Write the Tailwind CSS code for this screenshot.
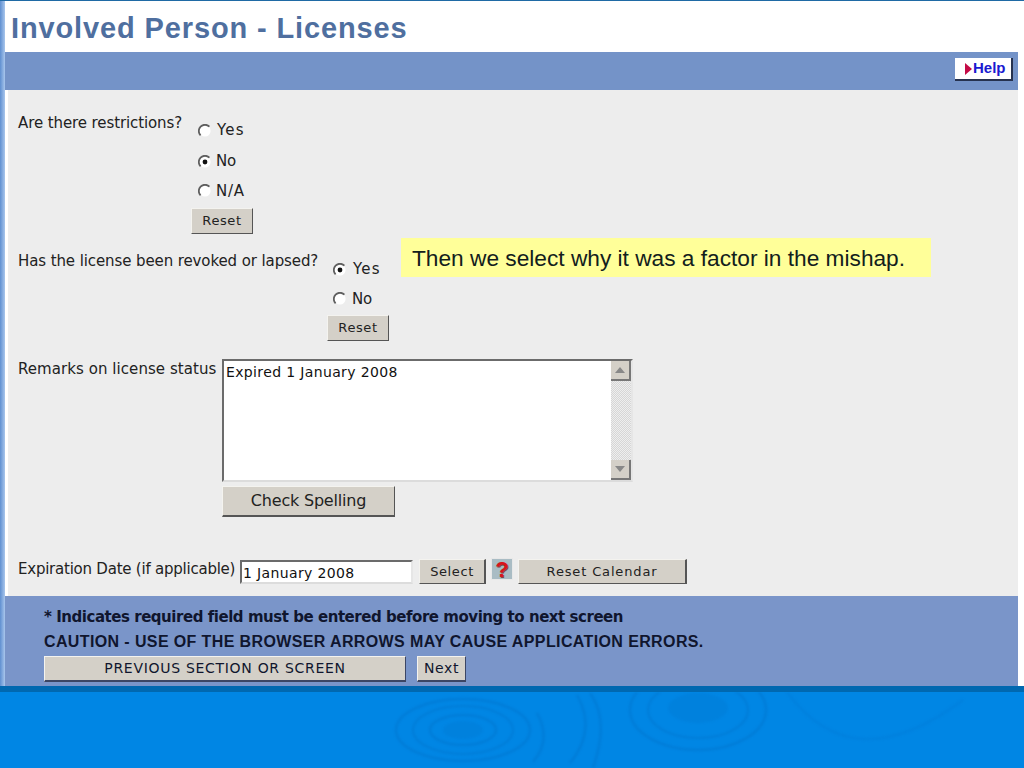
<!DOCTYPE html>
<html lang="en">
<head>
  <meta charset="UTF-8" />
  <title>Involved Person - Licenses</title>
  <script src="https://cdn.jsdelivr.net/npm/@tailwindcss/browser@4"></script>
</head>
<body class="w-[1024px] h-[768px] overflow-hidden bg-white relative font-['DejaVu_Sans',sans-serif] text-[#222]">
  <div class="h-[686px] flex border-t border-[#1f6aa5]">
    <div class="w-[5px] bg-gradient-to-r from-[#5f8fd0] to-[#a9c6ec]"></div>
    <div class="w-[1013px] flex flex-col">
      <h1 class="h-[51px] pl-[6px] pt-[7px] bg-white font-['Liberation_Sans',sans-serif] font-bold text-[29px] leading-[40px] tracking-[0.87px] text-[#4f6f9f]">Involved Person - Licenses</h1>
      <div class="h-[38px] bg-[#7493c8] flex items-start justify-end pr-[5px] pt-[6px]">
        <a class="w-[58px] h-[23px] pl-[10px] bg-white border-r-2 border-b-2 border-[#26324f] flex items-center gap-[1px] font-['Liberation_Sans',sans-serif] font-bold text-[15px] text-[#1a1ad0]">
          <svg width="7" height="12" viewBox="0 0 7 12"><path d="M0 0 L7 6 L0 12 Z" fill="#c40a45"/></svg>Help
        </a>
      </div>
      <div class="h-[506px] ml-[3px] bg-[#ededed] pl-[10px] text-[15px] tracking-[-0.1px]">
        <!-- restrictions -->
        <div class="h-[151px] flex pt-[21px]">
          <div class="w-[173px] leading-[24px]">Are there restrictions?</div>
          <div class="flex flex-col">
            <div class="h-[32px] pl-[7px] pt-[7px] flex items-center gap-[5px] tracking-[1.2px]"><svg width="14" height="14" viewBox="0 0 14 14"><circle cx="7" cy="7" r="5.6" fill="#fff"/><path d="M11.4 2.6 A6.2 6.2 0 0 0 2.6 11.4" fill="none" stroke="#5f5f5f" stroke-width="1.8"/></svg>Yes</div>
            <div class="h-[30px] pl-[7px] pt-[7px] flex items-center gap-[4px]"><svg width="14" height="14" viewBox="0 0 14 14"><circle cx="7" cy="7" r="5.6" fill="#fff"/><path d="M11.4 2.6 A6.2 6.2 0 0 0 2.6 11.4" fill="none" stroke="#5f5f5f" stroke-width="1.8"/><circle cx="7" cy="7" r="2.4" fill="#111"/></svg>No</div>
            <div class="h-[31px] pl-[7px] pt-[5px] flex items-center gap-[4px] tracking-[0.8px]"><svg width="14" height="14" viewBox="0 0 14 14"><circle cx="7" cy="7" r="5.6" fill="#fff"/><path d="M11.4 2.6 A6.2 6.2 0 0 0 2.6 11.4" fill="none" stroke="#5f5f5f" stroke-width="1.8"/></svg>N/A</div>
            <button class="mt-[4px] w-[62px] h-[26px] bg-[#d4d0c8] border border-[#f4f3ef] border-r-[#555] border-b-[#555] text-[13px] tracking-[0.6px]">Reset</button>
          </div>
        </div>
        <!-- revoked -->
        <div class="h-[118px] flex pt-[8px]">
          <div class="w-[309px] leading-[24px]">Has the license been revoked or lapsed?</div>
          <div class="flex flex-col">
            <div class="h-[32px] pl-[6px] pt-[9px] flex items-center gap-[6px] tracking-[1.2px]"><svg width="14" height="14" viewBox="0 0 14 14"><circle cx="7" cy="7" r="5.6" fill="#fff"/><path d="M11.4 2.6 A6.2 6.2 0 0 0 2.6 11.4" fill="none" stroke="#5f5f5f" stroke-width="1.8"/><circle cx="7" cy="7" r="2.4" fill="#111"/></svg>Yes</div>
            <div class="h-[30px] pl-[6px] pt-[6px] flex items-center gap-[5px]"><svg width="14" height="14" viewBox="0 0 14 14"><circle cx="7" cy="7" r="5.6" fill="#fff"/><path d="M11.4 2.6 A6.2 6.2 0 0 0 2.6 11.4" fill="none" stroke="#5f5f5f" stroke-width="1.8"/></svg>No</div>
            <button class="mt-[4px] w-[62px] h-[26px] bg-[#d4d0c8] border border-[#f4f3ef] border-r-[#555] border-b-[#555] text-[13px] tracking-[0.6px]">Reset</button>
          </div>
        </div>
        <!-- remarks -->
        <div class="h-[199px] flex">
          <div class="w-[204px] leading-[20px] tracking-[0.06px]">Remarks on license status</div>
          <div class="flex flex-col">
            <div class="w-[411px] h-[123px] bg-white border-2 border-[#6b6b6b] border-r-[#e6e6e6] border-b-[#dcdcdc] flex justify-between">
              <span class="pl-[2px] pt-[2px] text-[14px] tracking-[0.36px] leading-[18px] text-[#111]">Expired 1 January 2008</span>
              <div class="w-[20px] flex flex-col justify-between bg-[repeating-conic-gradient(#d6d6d6_0_25%,#eeeeee_0_50%)] bg-[length:2px_2px]">
                <div class="h-[20px] bg-[#d4d0c8] border-r-2 border-b-2 border-[#777] flex items-center justify-center"><svg width="10" height="6" viewBox="0 0 10 6"><path d="M5 0 L10 6 L0 6 Z" fill="#888"/></svg></div>
                <div class="h-[20px] bg-[#d4d0c8] border-r-2 border-b-2 border-[#777] flex items-center justify-center"><svg width="10" height="6" viewBox="0 0 10 6"><path d="M0 0 L10 0 L5 6 Z" fill="#888"/></svg></div>
              </div>
            </div>
            <button class="mt-[4px] w-[173px] h-[31px] bg-[#d4d0c8] border border-[#f4f3ef] border-r-[#555] border-b-[#555] border-b-2 text-[16px] tracking-[-0.2px]">Check Spelling</button>
          </div>
        </div>
        <!-- expiration -->
        <div class="flex items-start">
          <div class="w-[222px] pt-[1px] leading-[20px] tracking-[-0.23px]">Expiration Date (if applicable)</div>
          <div class="w-[173px] h-[24px] mt-[2px] bg-white border-2 border-[#6b6b6b] border-r-[#e6e6e6] border-b-[#dcdcdc] pl-[1px] text-[14px] tracking-[0.36px] leading-[22px] text-[#111]">1 January 2008</div>
          <button class="mt-[1px] ml-[6px] w-[67px] h-[25px] bg-[#d4d0c8] border border-[#f4f3ef] border-r-[#555] border-b-[#555] border-r-2 text-[13px] tracking-[0.6px]">Select</button>
          <div class="ml-[5px] w-[22px] h-[22px] bg-[#a9bcc4] border border-[#e8e8e8] flex items-center justify-center font-['Liberation_Sans',sans-serif] font-bold text-[22px] text-[#d8141c] [text-shadow:1px_1px_0_#7a4a4a]">?</div>
          <button class="mt-[1px] ml-[5px] w-[169px] h-[25px] bg-[#d4d0c8] border border-[#f4f3ef] border-r-[#555] border-b-[#555] border-r-2 text-[13px] tracking-[0.85px]">Reset Calendar</button>
        </div>
      </div>
      <div class="h-[90px] bg-[#7a95c9] pl-[39px] pt-[11px] text-[#10162e] font-bold">
        <p class="h-[25px] text-[15px] leading-[20px] tracking-[-0.46px]">* Indicates required field must be entered before moving to next screen</p>
        <p class="h-[24px] text-[16px] leading-[20px] font-['Liberation_Sans',sans-serif] tracking-[0.38px]">CAUTION - USE OF THE BROWSER ARROWS MAY CAUSE APPLICATION ERRORS.</p>
        <div class="flex gap-[11px] font-normal">
          <button class="w-[362px] h-[26px] bg-[#d4d0c8] border border-[#f4f3ef] border-r-[#3c4664] border-b-[#3c4664] border-b-2 text-[14px] tracking-[0.7px]">PREVIOUS SECTION OR SCREEN</button>
          <button class="w-[49px] h-[26px] bg-[#d4d0c8] border border-[#f4f3ef] border-r-[#3c4664] border-b-[#3c4664] border-b-2 text-[14px] tracking-[0.6px]">Next</button>
        </div>
      </div>
    </div>
  </div>
  <!-- callout over the form -->
  <div class="absolute left-[401px] top-[238px] w-[530px] h-[39px] bg-[#ffff99] pl-[11px] font-['Liberation_Sans',sans-serif] text-[22.7px] leading-[41px] text-[#12201c]">Then we select why it was a factor in the mishap.</div>
  <!-- slide footer with ripples -->
  <div class="h-[82px] bg-[#0086e4] border-t-[6px] border-[#0068b0] relative overflow-hidden">
    <svg class="absolute inset-0 blur-[1px]" width="1024" height="76" viewBox="0 0 1024 76" fill="none" stroke="#007dd8" stroke-width="2.5">
      <ellipse cx="463" cy="38" rx="67" ry="31"/>
      <ellipse cx="463" cy="38" rx="50" ry="24" stroke-width="2"/>
      <ellipse cx="463" cy="38" rx="33" ry="15"/>
      <ellipse cx="463" cy="38" rx="20" ry="9" fill="#0081dd" stroke="none"/>
      <path d="M537 21 Q552 48 533 70 M577 3 Q597 38 570 71 M590 1 Q610 28 593 76"/>
      <ellipse cx="698" cy="18" rx="68" ry="40"/>
      <ellipse cx="698" cy="18" rx="50" ry="28" stroke-width="2"/>
      <ellipse cx="698" cy="16" rx="30" ry="15" fill="#0081dd" stroke="none"/>
      <path d="M787 0 Q853 90 963 8" stroke="#0081de"/>
    </svg>
  </div>
</body>
</html>
